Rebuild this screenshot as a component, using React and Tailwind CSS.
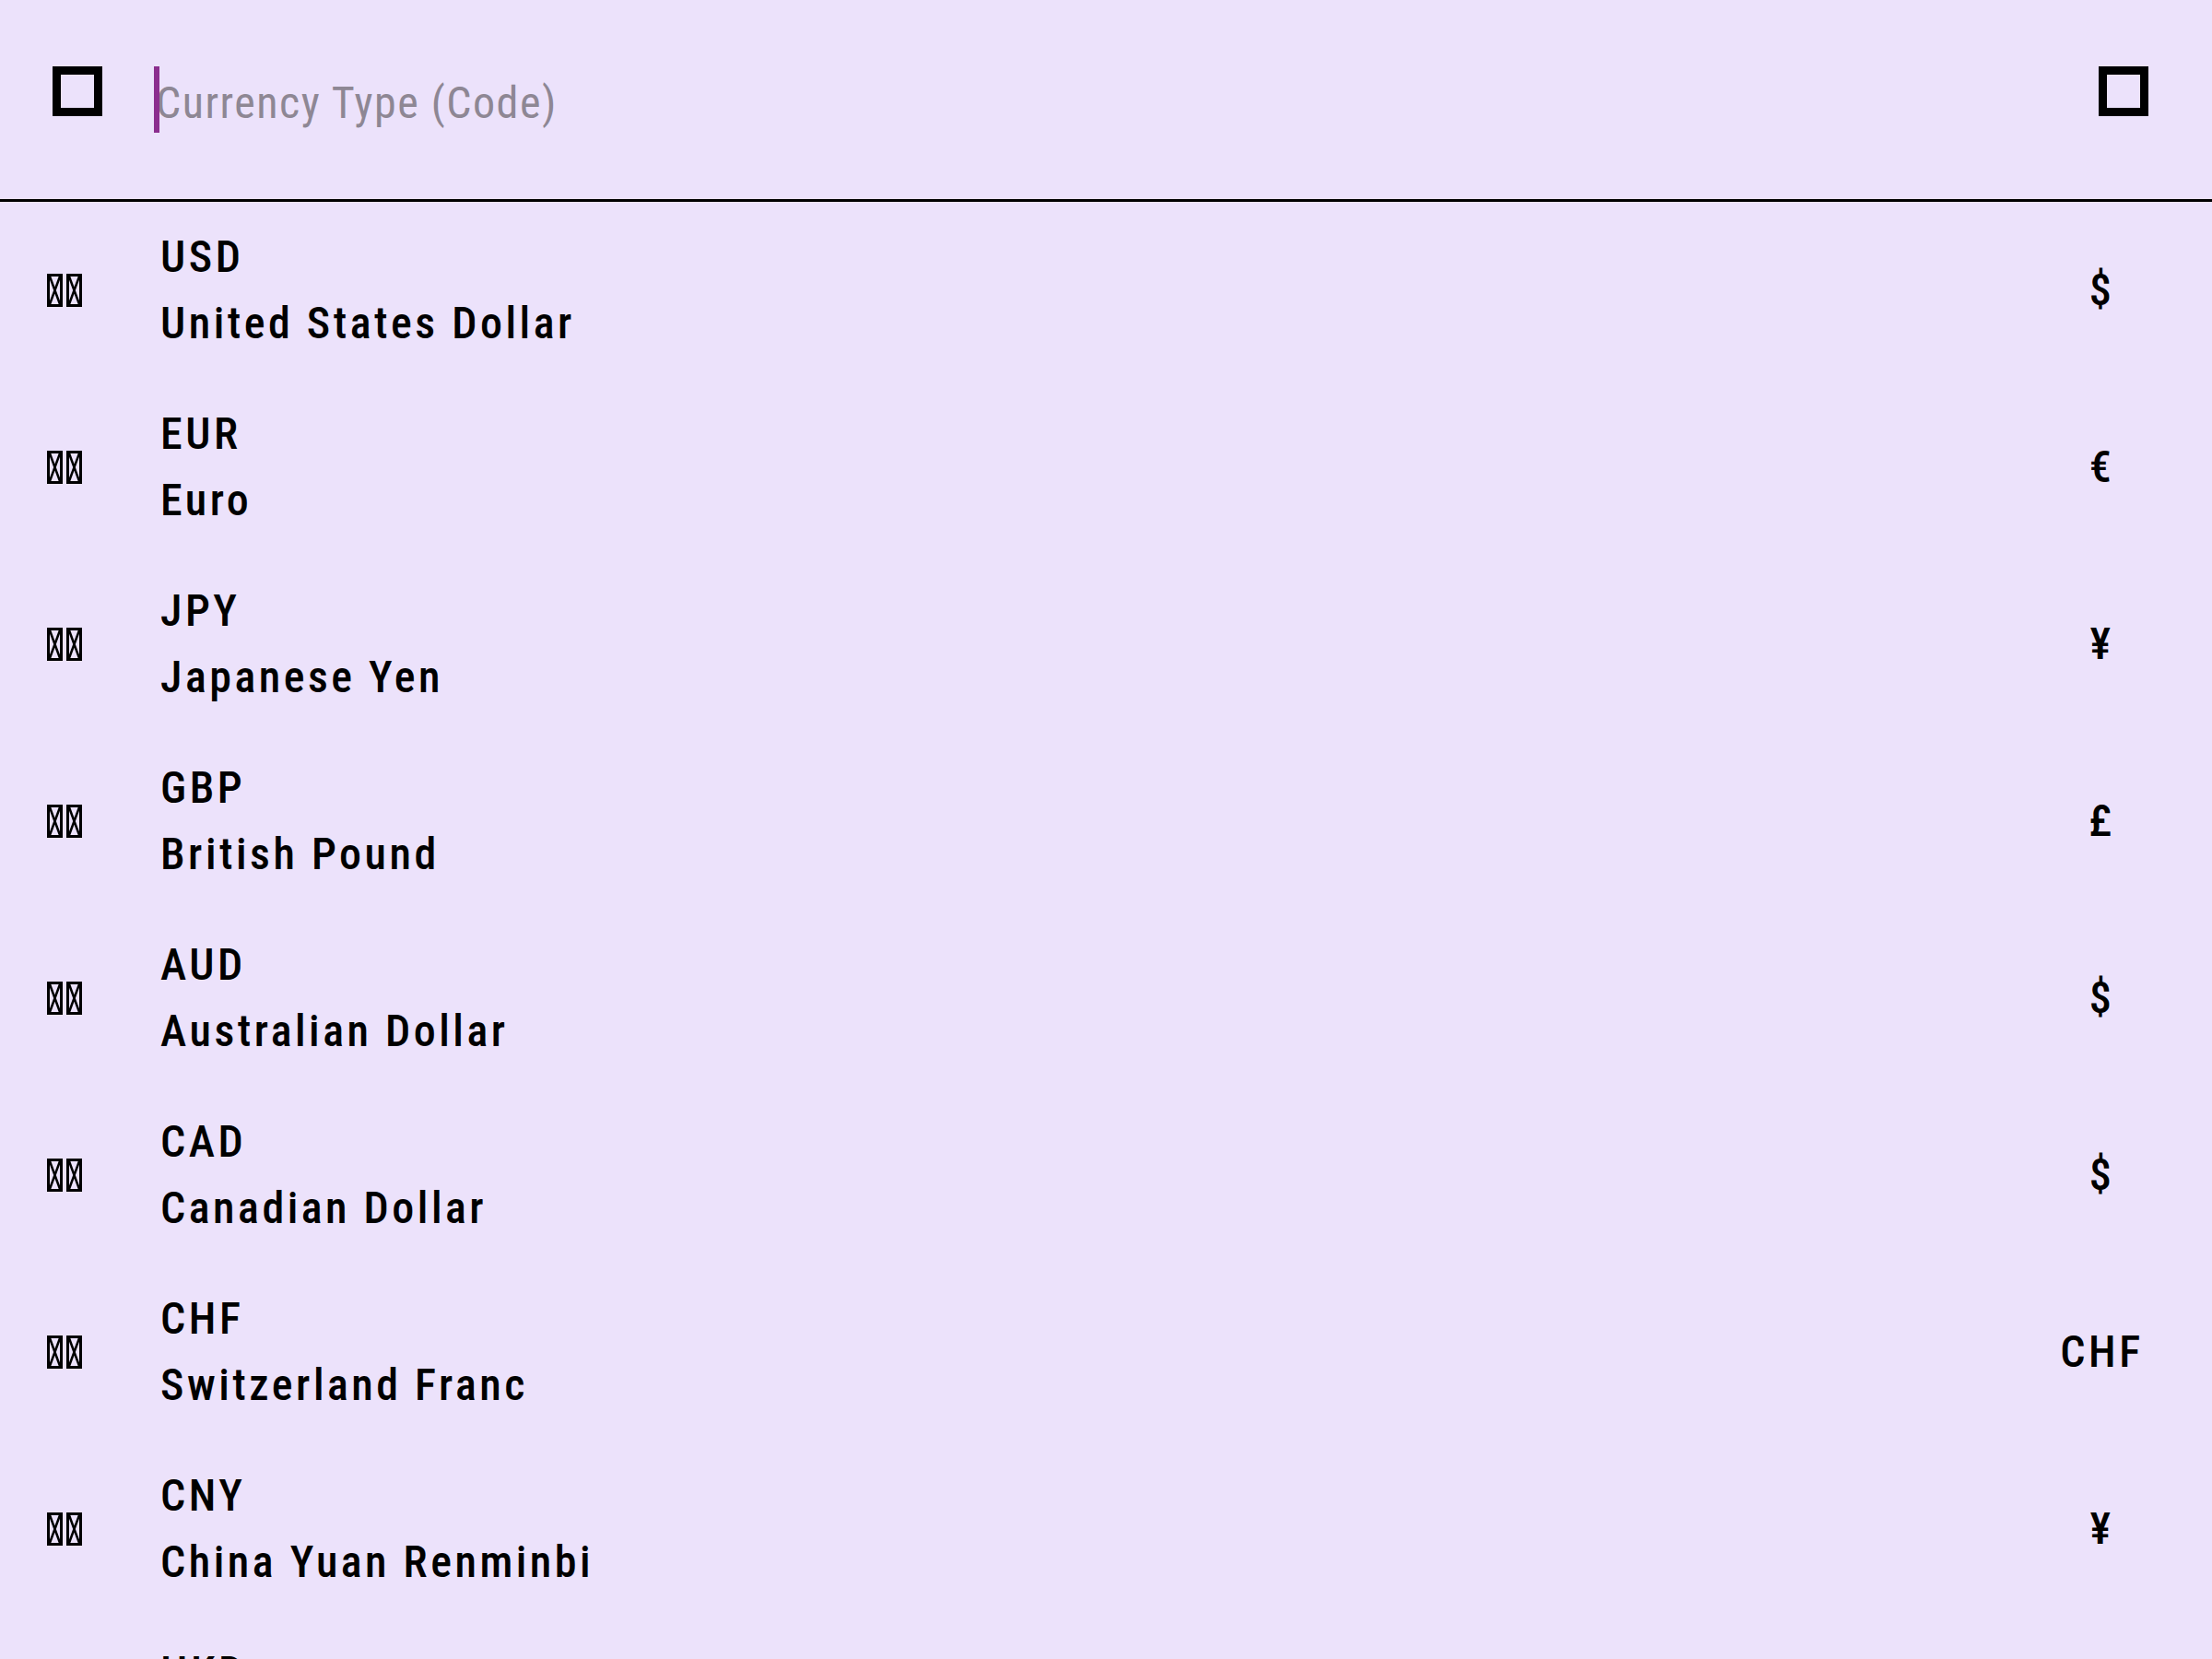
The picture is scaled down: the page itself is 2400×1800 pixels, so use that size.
const currencies = [
  { code: "USD", name: "United States Dollar", symbol: "$" },
  { code: "EUR", name: "Euro", symbol: "€" },
  { code: "JPY", name: "Japanese Yen", symbol: "¥" },
  { code: "GBP", name: "British Pound", symbol: "£" },
  { code: "AUD", name: "Australian Dollar", symbol: "$" },
  { code: "CAD", name: "Canadian Dollar", symbol: "$" },
  { code: "CHF", name: "Switzerland Franc", symbol: "CHF" },
  { code: "CNY", name: "China Yuan Renminbi", symbol: "¥" },
  { code: "HKD", name: "Hong Kong Dollar", symbol: "$" },
  { code: "NZD", name: "New Zealand Dollar", symbol: "$" },
];

// missing-glyph box, as the flag emoji render without an emoji font
function Tofu() {
  return (
    <svg width="17" height="36" viewBox="0 0 17 36">
      <rect x="1.5" y="1.5" width="14" height="33" fill="none" stroke="#000" strokeWidth="3" />
      <path d="M3 3 L14 33 M14 3 L3 33" stroke="#000" strokeWidth="2.5" />
    </svg>
  );
}

function Row({ code, name, symbol }) {
  return (
    <div className="flex h-[192px] items-center">
      <div className="ml-[51px] flex w-[38px] gap-[4px]">
        <Tofu />
        <Tofu />
      </div>
      <div className="ml-[85px] text-[48px] font-medium leading-[72px] tracking-[3.5px] text-black">
        <div>{code}</div>
        <div>{name}</div>
      </div>
      <div className="ml-auto mr-[72px] w-[98px] pl-[3px] text-center text-[48px] font-medium tracking-[3.5px] text-black">
        {symbol}
      </div>
    </div>
  );
}

export default function App() {
  return (
    <div
      className="h-[1800px] overflow-hidden bg-[#ECE2FB] font-stretch-condensed"
      style={{ fontFamily: "'Roboto Condensed', Roboto, 'Noto Sans', sans-serif" }}
    >
      <div className="flex h-[219px] items-start border-b-[3px] border-black">
        <div className="ml-[57px] mt-[72px] size-[54px] border-[9px] border-black" />
        <div className="relative ml-[58px] mt-[72px] h-[72px]">
          <div className="absolute left-[-2px] top-0 h-[72px] w-[6px] bg-[#8B2D8E]" />
          <span className="block pt-[4px] text-[48px] leading-[72px] tracking-[1.5px] text-[#8E8794]">
            Currency Type (Code)
          </span>
        </div>
        <div className="ml-auto mr-[69px] mt-[72px] size-[54px] border-[9px] border-black" />
      </div>
      <div>
        {currencies.map((c) => (
          <Row key={c.code} {...c} />
        ))}
      </div>
    </div>
  );
}
